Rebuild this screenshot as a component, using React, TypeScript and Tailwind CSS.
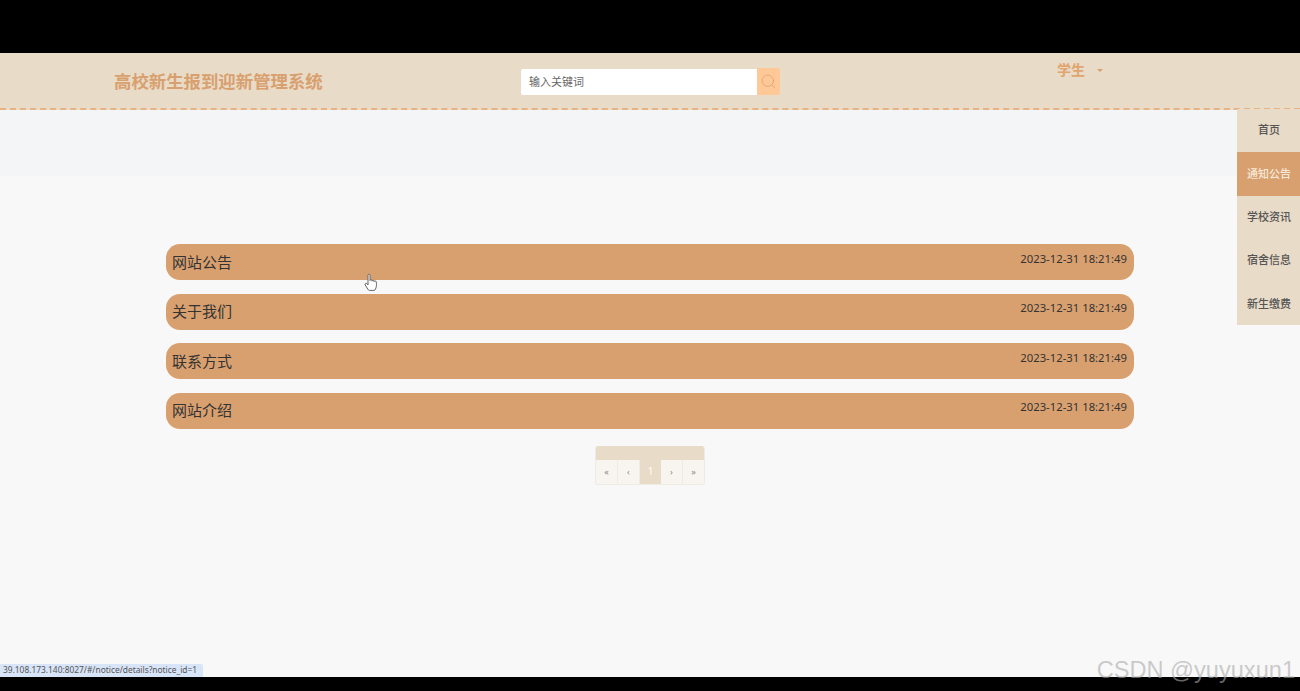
import { Search } from "lucide-react";

const notices = ["网站公告", "关于我们", "联系方式", "网站介绍"];
const sideLinks = ["首页", "通知公告", "学校资讯", "宿舍信息", "新生缴费"];
const pages = ["«", "‹", "1", "›", "»"];

export default function App() {
  return (
    <div className="flex h-[691px] flex-col overflow-hidden bg-black pt-[53px] font-['Noto_Sans','Noto_Sans_CJK_SC',sans-serif]">
      <main className="relative flex flex-1 flex-col bg-[#f8f8f8]">
        <Header />
        <div className="h-[66px] bg-[#f4f5f7]" />
        <NoticeList />
        <Pagination />
        <SideNav />
        <div className="absolute bottom-0 left-0 flex h-[13px] w-[203px] items-center rounded-tr-[2px] bg-[#d8e4f8] pl-[3px] text-[8.4px] whitespace-nowrap text-[#555]">
          39.108.173.140:8027/#/notice/details?notice_id=1
        </div>
        <div className="absolute right-[5px] bottom-[-7px] font-['Liberation_Sans',sans-serif] text-[23.6px] leading-[28px] text-[rgba(170,170,170,0.6)]">
          CSDN @yuyuxun1
        </div>
        <HandCursor />
      </main>
      <div className="h-[14px] shrink-0 bg-black" />
    </div>
  );
}

function Header() {
  return (
    <header className="flex h-[57px] shrink-0 border-b-2 border-dashed border-[#e8b384] bg-[#e8dbc7] pl-[114px] shadow-[0_1px_3px_rgba(0,0,0,0.08)]">
      <h1 className="mt-[15px] w-[407px] text-[17.4px] leading-[26px] font-bold text-[#d9a06f]">
        高校新生报到迎新管理系统
      </h1>
      <div className="mt-[15px] flex h-[27px] w-[259px]">
        <div className="mt-[1px] flex flex-1 items-center rounded-l-[2px] bg-white pl-[8px] text-[11px] text-[#666]">
          输入关键词
        </div>
        <div className="flex w-[23px] items-center justify-center rounded-r-[3px] bg-[#ffc896]">
          <Search size={17} strokeWidth={1.1} className="text-[#d9a476]" />
        </div>
      </div>
      <div className="mt-[6px] ml-[277px] flex h-[21px] items-center">
        <span className="text-[14px] font-bold text-[#e0a46f]">学生</span>
        <span className="mt-[1px] ml-[12px] border-x-[3px] border-t-[3px] border-x-transparent border-t-[#d9a06f]" />
      </div>
    </header>
  );
}

function NoticeList() {
  return (
    <div className="mx-[166px] mt-[68px] flex flex-col gap-[13.6px]">
      {notices.map((title) => (
        <div
          key={title}
          className="flex h-[36px] items-start justify-between rounded-[14px] bg-[#d9a06f] pr-[7px] pl-[6px] text-[#333]"
        >
          <span className="mt-[5.5px] text-[15px] leading-[24px]">{title}</span>
          <span className="mt-[5.5px] text-[11.3px] leading-[18px]">2023-12-31 18:21:49</span>
        </div>
      ))}
    </div>
  );
}

function Pagination() {
  return (
    <div className="mx-auto mt-[17px] w-[110px] overflow-hidden rounded-[3px] border-x border-b border-[#eeeae4]">
      <div className="h-[14px] bg-[#e8dbc7]" />
      <div className="flex h-[24px]">
        {pages.map((page) => (
          <div
            key={page}
            className={
              page === "1"
                ? "flex flex-1 items-center justify-center bg-[#e8dbc7] text-[10px] text-white"
                : "flex flex-1 items-center justify-center border-r border-[#eeeae4] bg-[#f8f5f0] text-[9px] text-[#888] last:border-r-0"
            }
          >
            {page}
          </div>
        ))}
      </div>
    </div>
  );
}

function SideNav() {
  return (
    <nav className="absolute top-[56px] right-0 flex w-[63px] flex-col bg-[#e8dbc7]">
      {sideLinks.map((link) => (
        <div
          key={link}
          className={
            link === "通知公告"
              ? "flex h-[43.3px] items-center justify-center bg-[#d9a06f] pl-[1px] text-[11px] font-medium text-[#f6e8d8]"
              : "flex h-[43.3px] items-center justify-center pl-[1px] text-[11px] font-medium text-[#555]"
          }
        >
          {link}
        </div>
      ))}
    </nav>
  );
}

function HandCursor() {
  return (
    <svg
      className="absolute top-[220px] left-[364px]"
      width="14"
      height="19"
      viewBox="0 0 14 19"
      fill="white"
      stroke="#666"
      strokeWidth="1"
      strokeLinejoin="round"
    >
      <path d="M4 10V2.2C4 .8 6 .8 6 2.2V7.5c0-1.2 2-1.2 2 0v.6c0-1.2 2-1.2 2 0v.6c0-1.1 2-1.1 2.2 0 .5 2.6.4 5-.7 7.3-.3.7-.7 1.4-1.4 1.4H5.5c-.8 0-1.2-.5-1.7-1.3L1.2 12c-.7-1.3.9-2.4 1.8-1.2L4 12z" />
    </svg>
  );
}
